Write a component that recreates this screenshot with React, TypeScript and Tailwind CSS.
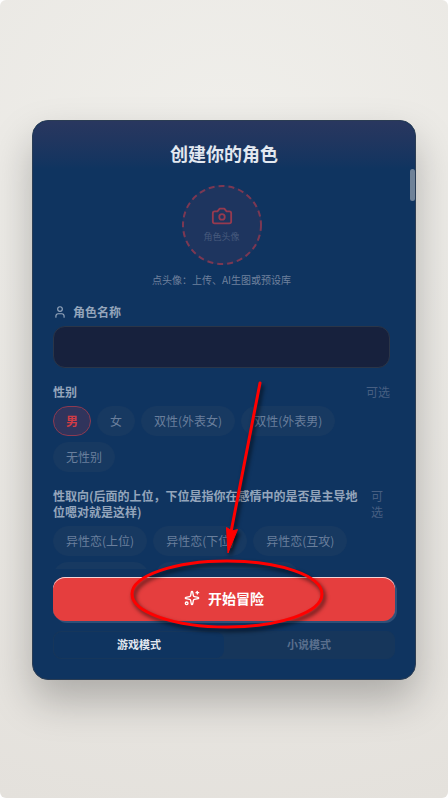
import React, { useState } from 'react';
import { Sparkles, User } from 'lucide-react';

interface ChipGroupProps {
  label: string;
  options: string[];
  value: string;
  onChange: (value: string) => void;
  children?: React.ReactNode;
}

const GENDERS = ['男', '女', '双性(外表女)', '双性(外表男)', '无性别'];

const ORIENTATIONS = ['异性恋(上位)', '异性恋(下位)', '异性恋(互攻)'];

const MODES = ['游戏模式', '小说模式'];

const ChipGroup: React.FC<ChipGroupProps> = ({ label, options, value, onChange, children }) => (
  <section className="mt-4">
    <div className="flex justify-between text-xs leading-4">
      <h2 className="pr-2 font-bold text-[#94a5bb]">{label}</h2>
      <span className="text-[#475f82]">可选</span>
    </div>
    <div className="mt-1.5 flex flex-wrap gap-1.5">
      {options.map((option) => (
        <button
          key={option}
          type="button"
          onClick={() => onChange(option)}
          className={`h-[30px] rounded-full border px-3 text-xs ${
            option === value
              ? 'border-[#8c3a51] bg-[#30345c] font-bold text-[#d03c46]'
              : 'border-[#173961] bg-[#173961] text-[#6a7f9c]'
          }`}
        >
          {option}
        </button>
      ))}
      {children}
    </div>
  </section>
);

const Pointer: React.FC = () => (
  <svg
    viewBox="0 0 200 254"
    className="pointer-events-none absolute bottom-[48px] left-1/2 ml-[-96px] h-[254px] w-[200px] overflow-visible drop-shadow-[2px_3px_2px_rgba(0,0,0,0.7)]"
    fill="none"
    stroke="#ff0000"
    aria-hidden="true"
  >
    <path d="M132 6 103 155" strokeWidth="3" strokeLinecap="round" />
    <path d="M98.500 150.500 104 154 109.500 152.500 100 176Z" fill="#ff0000" strokeWidth="1" />
    <ellipse cx="99" cy="217" rx="95" ry="33" strokeWidth="3" />
  </svg>
);

const App: React.FC = () => {
  const [name, setName] = useState('');
  const [gender, setGender] = useState('男');
  const [orientation, setOrientation] = useState('');
  const [mode, setMode] = useState('游戏模式');

  return (
    <main className="flex min-h-screen items-center justify-center rounded-md bg-[radial-gradient(circle_at_50%_20%,#f0efeb,#e4e1dc)] px-8 pt-0.5 font-['Noto_Sans_CJK_SC',sans-serif]">
      <div className="relative flex h-[560px] w-full max-w-md flex-col rounded-2xl border border-[#2b3d54] bg-[#0f3460] shadow-[0_20px_40px_rgba(0,0,0,0.25)]">
        <header className="rounded-t-2xl bg-linear-to-b from-[#29375f] to-[#0f3460] px-5 pt-5 pb-1">
          <h1 className="text-center text-lg leading-6 font-bold text-[#e2e8f0]">创建你的角色</h1>
        </header>

        <div className="min-h-0 flex-1 overflow-hidden pt-4 pr-[25px] pl-5">
          <div className="flex flex-col items-center">
            <button
              type="button"
              className="relative flex size-20 flex-col items-center justify-center gap-0.5 rounded-full bg-[#1e355f] text-[9px] leading-4 text-[#475a7d]"
            >
              <svg viewBox="0 0 80 80" className="absolute inset-0 size-20" fill="none" aria-hidden="true">
                <circle cx="40" cy="40" r="39" stroke="#7b3853" strokeWidth="2" strokeDasharray="6 4" />
              </svg>
              <svg
                viewBox="0 0 24 24"
                className="size-[22px]"
                fill="none"
                stroke="#963a4f"
                strokeWidth="2"
                strokeLinecap="round"
                strokeLinejoin="round"
                aria-hidden="true"
              >
                <path d="M14.500 4h-5L7 7H4a2 2 0 0 0-2 2v9a2 2 0 0 0 2 2h16a2 2 0 0 0 2-2V9a2 2 0 0 0-2-2h-3l-2.500-3z" />
                <circle cx="12" cy="13" r="3" />
              </svg>
              角色头像
            </button>
            <p className="mt-[7px] text-[10px] leading-4 text-[#6f819d]">点头像：上传、AI生图或预设库</p>
          </div>

          <label
            htmlFor="role-name"
            className="mt-4 flex items-center gap-1.5 text-xs leading-4 font-bold text-[#94a5bb]"
          >
            <User size={14} strokeWidth={2} />
            角色名称
          </label>
          <input
            id="role-name"
            value={name}
            onChange={(e) => setName(e.target.value)}
            className="mt-1.5 block h-[42px] w-full rounded-xl border border-[#2a3548] bg-[#17213d] px-3 text-sm text-[#e2e8f0] outline-none"
          />

          <ChipGroup label="性别" options={GENDERS} value={gender} onChange={setGender} />
          <ChipGroup
            label="性取向(后面的上位，下位是指你在感情中的是否是主导地位嗯对就是这样)"
            options={ORIENTATIONS}
            value={orientation}
            onChange={setOrientation}
          >
            <div className="flex w-full gap-1.5" aria-hidden="true">
              <span className="h-[30px] w-24 rounded-full bg-[#173961]" />
              <span className="h-[30px] w-36 rounded-full bg-[#173961]" />
            </div>
          </ChipGroup>
        </div>

        <div className="absolute top-12 right-0 h-8 w-[5px] rounded-full bg-[#6f8298]" />

        <footer className="px-5 pt-2 pb-5">
          <button
            type="button"
            className="flex h-11 w-full items-center justify-center gap-2 rounded-xl bg-[#e53e3e] pb-0.5 text-sm font-bold text-white shadow-[2px_2px_0_#2f5078,inset_0_1px_0_#f3d3d6]"
          >
            <Sparkles size={16} strokeWidth={2} />
            开始冒险
          </button>
          <div className="mt-2.5 flex rounded-lg border border-[#16365b] bg-[#16365b]">
            {MODES.map((item) => (
              <button
                key={item}
                type="button"
                onClick={() => setMode(item)}
                className={`h-[26px] flex-1 rounded-lg pb-0.5 text-[11px] font-bold ${
                  item === mode ? 'bg-[#0f3460] text-[#e2e8f0]' : 'text-[#5a6f8d]'
                }`}
              >
                {item}
              </button>
            ))}
          </div>
        </footer>

        <Pointer />
      </div>
    </main>
  );
};

export default App;
